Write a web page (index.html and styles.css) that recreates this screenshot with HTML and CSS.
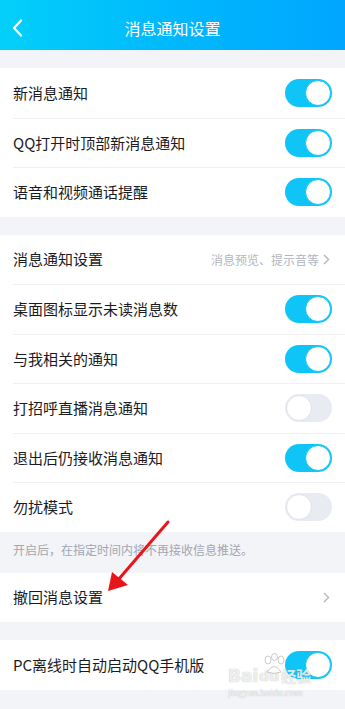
FILE: index.html
```html
<!DOCTYPE html>
<html lang="zh">
<head>
<meta charset="utf-8">
<title>消息通知设置</title>
<link rel="stylesheet" href="styles.css">
</head>
<body>
<div class="page">
  <header class="bar">
    <svg class="back" width="12" height="18" viewBox="0 0 12 18"><path d="M10 1.5 L3 9 L10 16.5" fill="none" stroke="#fff" stroke-width="2.2" stroke-linecap="round" stroke-linejoin="round"/></svg>
    <div class="title">消息通知设置</div>
  </header>

  <div class="gap"></div>
  <section class="group">
    <div class="row"><span class="label">新消息通知</span><span class="sw on"></span></div>
    <div class="row"><span class="label">QQ打开时顶部新消息通知</span><span class="sw on"></span></div>
    <div class="row"><span class="label">语音和视频通话提醒</span><span class="sw on"></span></div>
  </section>

  <div class="gap"></div>
  <section class="group">
    <div class="row"><span class="label">消息通知设置</span><span class="extra">消息预览、提示音等<svg class="chev" width="7" height="11" viewBox="0 0 7 11"><path d="M1 1 L5.5 5.5 L1 10" fill="none" stroke="#b4b7c1" stroke-width="1.4"/></svg></span></div>
    <div class="row"><span class="label">桌面图标显示未读消息数</span><span class="sw on"></span></div>
    <div class="row"><span class="label">与我相关的通知</span><span class="sw on"></span></div>
    <div class="row"><span class="label">打招呼直播消息通知</span><span class="sw"></span></div>
    <div class="row"><span class="label">退出后仍接收消息通知</span><span class="sw on"></span></div>
    <div class="row"><span class="label">勿扰模式</span><span class="sw"></span></div>
  </section>
  <div class="note">开启后，在指定时间内将不再接收信息推送。</div>

  <section class="group">
    <div class="row"><span class="label">撤回消息设置</span><svg class="chev" width="7" height="11" viewBox="0 0 7 11"><path d="M1 1 L5.5 5.5 L1 10" fill="none" stroke="#b4b7c1" stroke-width="1.4"/></svg></div>
  </section>

  <div class="gap"></div>
  <section class="group">
    <div class="row"><span class="label">PC离线时自动启动QQ手机版</span><span class="sw on"></span></div>
  </section>

  <svg class="arrow" width="345" height="709" viewBox="0 0 345 709">
    <line x1="168" y1="522" x2="118" y2="580" stroke="#e8151b" stroke-width="3" stroke-linecap="round"/>
    <polygon points="108,591 112,572 128,585" fill="#e8151b"/>
  </svg>

  <div class="mark">
    <svg class="paw" width="26" height="22" viewBox="0 0 26 22">
      <g fill="none" stroke="rgba(190,190,190,0.8)" stroke-width="1">
        <ellipse cx="7" cy="7" rx="3" ry="4"/>
        <ellipse cx="13.5" cy="4" rx="3" ry="3.5"/>
        <ellipse cx="20" cy="7" rx="3" ry="4"/>
        <path d="M6 19 Q13 8 20 19 Q13 22 6 19 Z"/>
      </g>
    </svg>
    <div class="mark-top"><span class="bai">Bai</span><span class="du">du</span><span class="jy">经验</span></div>
    <div class="mark-url">jingyan.baidu.com</div>
  </div>
</div>
</body>
</html>
```

FILE: styles.css
```css
html, body {
  margin: 0;
  padding: 0;
}
body {
  background: #f3f4f8;
  font-family: "Noto Sans CJK SC", "Noto Sans", sans-serif;
  color: #1b1b1f;
}
.page {
  position: relative;
  width: 345px;
  height: 709px;
  overflow: hidden;
  background: #f3f4f8;
}
.bar {
  height: 50px;
  background: linear-gradient(90deg, #03d0f9 0%, #00b8fd 50%, #00a6ff 100%);
  display: flex;
  align-items: center;
  justify-content: center;
  position: relative;
}
.back {
  position: absolute;
  left: 11px;
  top: 19px;
}
.title {
  color: #fff;
  font-size: 16px;
  line-height: 20px;
  margin-top: 6px;
}
.gap {
  height: 18px;
}
.group {
  background: #fff;
  padding-left: 13px;
}
.row {
  height: 49.5px;
  box-sizing: border-box;
  display: flex;
  align-items: center;
  justify-content: space-between;
  padding-right: 13px;
}
.row + .row {
  border-top: 1px solid #eff0f4;
}
.label {
  font-size: 15px;
  line-height: 20px;
  color: #1b1b1f;
}
.extra {
  font-size: 12px;
  color: #b2b5bf;
  display: flex;
  align-items: center;
  gap: 4px;
  margin-right: 2px;
}
.chev {
  display: block;
}
.row > .chev {
  margin-right: 2px;
}
.sw {
  width: 47px;
  height: 28px;
  border-radius: 14px;
  background: #e9ebf3;
  position: relative;
  box-sizing: border-box;
}
.sw::after {
  content: "";
  position: absolute;
  top: 1px;
  left: 1px;
  width: 26px;
  height: 26px;
  border-radius: 50%;
  background: #fff;
  box-sizing: border-box;
  border: 1px solid #dfe2ea;
}
.sw.on {
  background: #0fc5f8;
}
.sw.on::after {
  left: 20px;
  border-color: #0fc5f8;
}
.note {
  height: 41px;
  box-sizing: border-box;
  padding: 9px 13px 0;
  font-size: 12px;
  line-height: 18px;
  color: #a3a6b0;
}
.arrow {
  position: absolute;
  left: 0;
  top: 0;
  pointer-events: none;
}
.mark {
  position: absolute;
  left: 228px;
  top: 653px;
  width: 100px;
  color: rgba(255, 255, 255, 0.8);
  text-shadow: 0 0 1px rgba(140, 140, 140, 0.7);
  font-family: "DejaVu Sans", sans-serif;
}
.paw {
  position: absolute;
  left: 33px;
  top: 0;
}
.mark-top {
  display: flex;
  align-items: flex-end;
  height: 18px;
  margin-top: 14px;
  font-weight: bold;
  font-size: 17px;
  line-height: 18px;
}
.du {
  font-size: 14px;
  margin-left: 1px;
}
.jy {
  font-family: "Noto Sans CJK SC", sans-serif;
  font-size: 15px;
  margin-left: 2px;
}
.mark-url {
  font-size: 10px;
  line-height: 12px;
  margin-top: 2px;
  font-family: "Liberation Serif", serif;
}
```
